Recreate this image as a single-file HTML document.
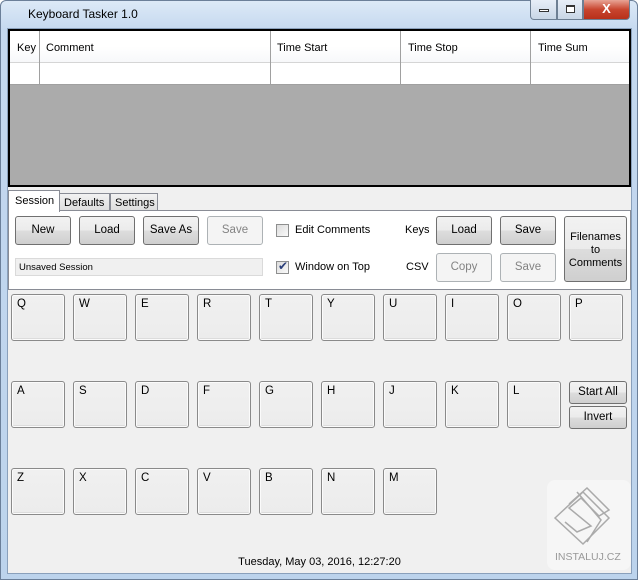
<!DOCTYPE html>
<html><head><style>
*{box-sizing:border-box;margin:0;padding:0}
body{width:638px;height:580px;overflow:hidden;font-family:"Liberation Sans",sans-serif;font-size:11px;background:#fff;position:relative}
.frame{position:absolute;left:0;top:0;width:638px;height:580px;background:linear-gradient(#dce9f7,#c4d8ef 30px,#bcd3ec);border:1px solid #6b7f99;border-radius:6px 6px 0 0}
.title{position:absolute;left:28px;top:7px;font-size:12px;color:#000}
.client{position:absolute;left:7px;top:28px;width:625px;height:546px;background:#f0f0f0;border:1px solid #8aa0bb}
.abs{position:absolute}
.btn{position:absolute;border:1px solid #707070;border-radius:3px;background:linear-gradient(#f2f2f2 0,#ebebeb 50%,#dddddd 50%,#cfcfcf 100%);text-align:center;font-size:11.5px;color:#000}
.dis{border-color:#adb2b5;background:#f4f4f4;color:#838383}
.key{position:absolute;width:54px;height:47px;border:1px solid #8a8a8a;border-radius:3px;background:linear-gradient(#f0f0f0 0,#ececec 100%);box-shadow:inset 0 0 0 1px #fbfbfb,inset 0 -2px 0 #dcdcdc;padding:3px 0 0 5px;font-size:11.5px}
.cb{position:absolute;width:13px;height:13px;border:1px solid #8e8f8f;background:linear-gradient(135deg,#dcdcdc,#fafafa)}
.wc{position:absolute;top:0;height:20px;border:1px solid #6d7f93;border-top:none}
</style></head><body>
<div class="frame"></div>
<div class="title">Keyboard Tasker 1.0</div>
<div class="wc" style="left:530px;width:27px;border-radius:0 0 0 4px;background:linear-gradient(#e7eef7,#c8d6e6)"><div class="abs" style="left:8px;top:9px;width:10px;height:3px;border:1px solid #333;background:#fff"></div></div>
<div class="wc" style="left:557px;width:26px;background:linear-gradient(#e7eef7,#c8d6e6)"><div class="abs" style="left:8px;top:5px;width:9px;height:8px;border:1px solid #333;border-top-width:2px;background:#fff"></div></div>
<div class="wc" style="left:583px;width:47px;border-radius:0 0 4px 0;background:linear-gradient(#e8a495,#c8452e 50%,#b8301a)"><div class="abs" style="left:0;width:45px;top:1px;text-align:center;color:#fff;font-weight:bold;font-size:13px">X</div></div>
<div class="client">
<div class="abs" style="left:0;top:0;width:623px;height:158px;border:2px solid #000;background:#ababab">
 <div class="abs" style="left:0;top:0;width:619px;height:32px;background:linear-gradient(#fff,#fff 50%,#f7f8fa);border-bottom:1px solid #d5d5d5"></div>
 <div class="abs" style="left:0;top:32px;width:619px;height:22px;background:#fff;border-bottom:1px solid #a0a0a0"></div>
 <div class="abs" style="left:29px;top:0;width:1px;height:54px;background:#a0a0a0"></div>
 <div class="abs" style="left:260px;top:0;width:1px;height:54px;background:#a0a0a0"></div>
 <div class="abs" style="left:390px;top:0;width:1px;height:54px;background:#a0a0a0"></div>
 <div class="abs" style="left:520px;top:0;width:1px;height:54px;background:#a0a0a0"></div>
 <div class="abs" style="left:7px;top:11px">Key</div>
 <div class="abs" style="left:36px;top:11px">Comment</div>
 <div class="abs" style="left:267px;top:11px">Time Start</div>
 <div class="abs" style="left:398px;top:11px">Time Stop</div>
 <div class="abs" style="left:528px;top:11px">Time Sum</div>
</div>
<div class="abs" style="left:0;top:161px;width:52px;height:22px;background:#fff;border:1px solid #898c95;border-bottom:none;z-index:2;padding:4px 0 0 6px">Session</div>
<div class="abs" style="left:51px;top:164px;width:51px;height:18px;background:linear-gradient(#f2f2f2,#dedede);border:1px solid #898c95;padding:3px 0 0 4px">Defaults</div>
<div class="abs" style="left:102px;top:164px;width:48px;height:18px;background:linear-gradient(#f2f2f2,#dedede);border:1px solid #898c95;padding:3px 0 0 4px">Settings</div>
<div class="abs" style="left:0;top:181px;width:623px;height:80px;background:#fff;border:1px solid #898c95"></div>
<div class="btn" style="left:7px;top:187px;width:56px;height:29px;line-height:27px">New</div>
<div class="btn" style="left:71px;top:187px;width:56px;height:29px;line-height:27px">Load</div>
<div class="btn" style="left:135px;top:187px;width:56px;height:29px;line-height:27px">Save As</div>
<div class="btn dis" style="left:199px;top:187px;width:56px;height:29px;line-height:27px">Save</div>
<div class="abs" style="left:7px;top:229px;width:248px;height:18px;border:1px solid #dadada;background:#f0f0f0;font-size:9.5px;padding:3px 0 0 3px">Unsaved Session</div>
<div class="cb" style="left:268px;top:195px"></div>
<div class="abs" style="left:287px;top:195px">Edit Comments</div>
<div class="cb" style="left:268px;top:232px"><div class="abs" style="left:1px;top:-3px;font-size:12px;color:#2b3f7a">✔</div></div>
<div class="abs" style="left:287px;top:232px">Window on Top</div>
<div class="abs" style="left:397px;top:195px">Keys</div>
<div class="abs" style="left:398px;top:232px">CSV</div>
<div class="btn" style="left:428px;top:187px;width:56px;height:29px;line-height:27px">Load</div>
<div class="btn" style="left:492px;top:187px;width:56px;height:29px;line-height:27px">Save</div>
<div class="btn dis" style="left:428px;top:224px;width:56px;height:29px;line-height:27px">Copy</div>
<div class="btn dis" style="left:492px;top:224px;width:56px;height:29px;line-height:27px">Save</div>
<div class="btn" style="left:556px;top:187px;width:63px;height:66px;line-height:13px;padding-top:14px;font-size:11px">Filenames<br>to<br>Comments</div>
<div class="key" style="left:3px;top:265px">Q</div>
<div class="key" style="left:65px;top:265px">W</div>
<div class="key" style="left:127px;top:265px">E</div>
<div class="key" style="left:189px;top:265px">R</div>
<div class="key" style="left:251px;top:265px">T</div>
<div class="key" style="left:313px;top:265px">Y</div>
<div class="key" style="left:375px;top:265px">U</div>
<div class="key" style="left:437px;top:265px">I</div>
<div class="key" style="left:499px;top:265px">O</div>
<div class="key" style="left:561px;top:265px">P</div>
<div class="key" style="left:3px;top:352px">A</div>
<div class="key" style="left:65px;top:352px">S</div>
<div class="key" style="left:127px;top:352px">D</div>
<div class="key" style="left:189px;top:352px">F</div>
<div class="key" style="left:251px;top:352px">G</div>
<div class="key" style="left:313px;top:352px">H</div>
<div class="key" style="left:375px;top:352px">J</div>
<div class="key" style="left:437px;top:352px">K</div>
<div class="key" style="left:499px;top:352px">L</div>
<div class="btn" style="left:561px;top:352px;width:58px;height:23px;line-height:21px">Start All</div>
<div class="btn" style="left:561px;top:377px;width:58px;height:23px;line-height:21px">Invert</div>
<div class="key" style="left:3px;top:439px">Z</div>
<div class="key" style="left:65px;top:439px">X</div>
<div class="key" style="left:127px;top:439px">C</div>
<div class="key" style="left:189px;top:439px">V</div>
<div class="key" style="left:251px;top:439px">B</div>
<div class="key" style="left:313px;top:439px">N</div>
<div class="key" style="left:375px;top:439px">M</div>
<div class="abs" style="left:0;width:623px;top:527px;text-align:center">Tuesday, May 03, 2016, 12:27:20</div>
<div class="abs" style="left:539px;top:451px;width:84px;height:90px;background:#f6f6f6;border-radius:8px">
<svg width="84" height="70" viewBox="0 0 84 70" style="position:absolute;left:0;top:0" fill="none" stroke="#aaa" stroke-width="1.5">
<path d="M8 38 L36 12 L62 38 L36 64 Z"/><path d="M22 24 L40 8 L62 30 L52 36 L34 18 L22 28 L44 46 L30 52 L18 42"/><path d="M30 12 L54 40 L40 62"/>
</svg>
<div class="abs" style="left:8px;top:71px;font-size:10.5px;color:#999">INSTALUJ.CZ</div>
</div>
</div>
</body></html>
